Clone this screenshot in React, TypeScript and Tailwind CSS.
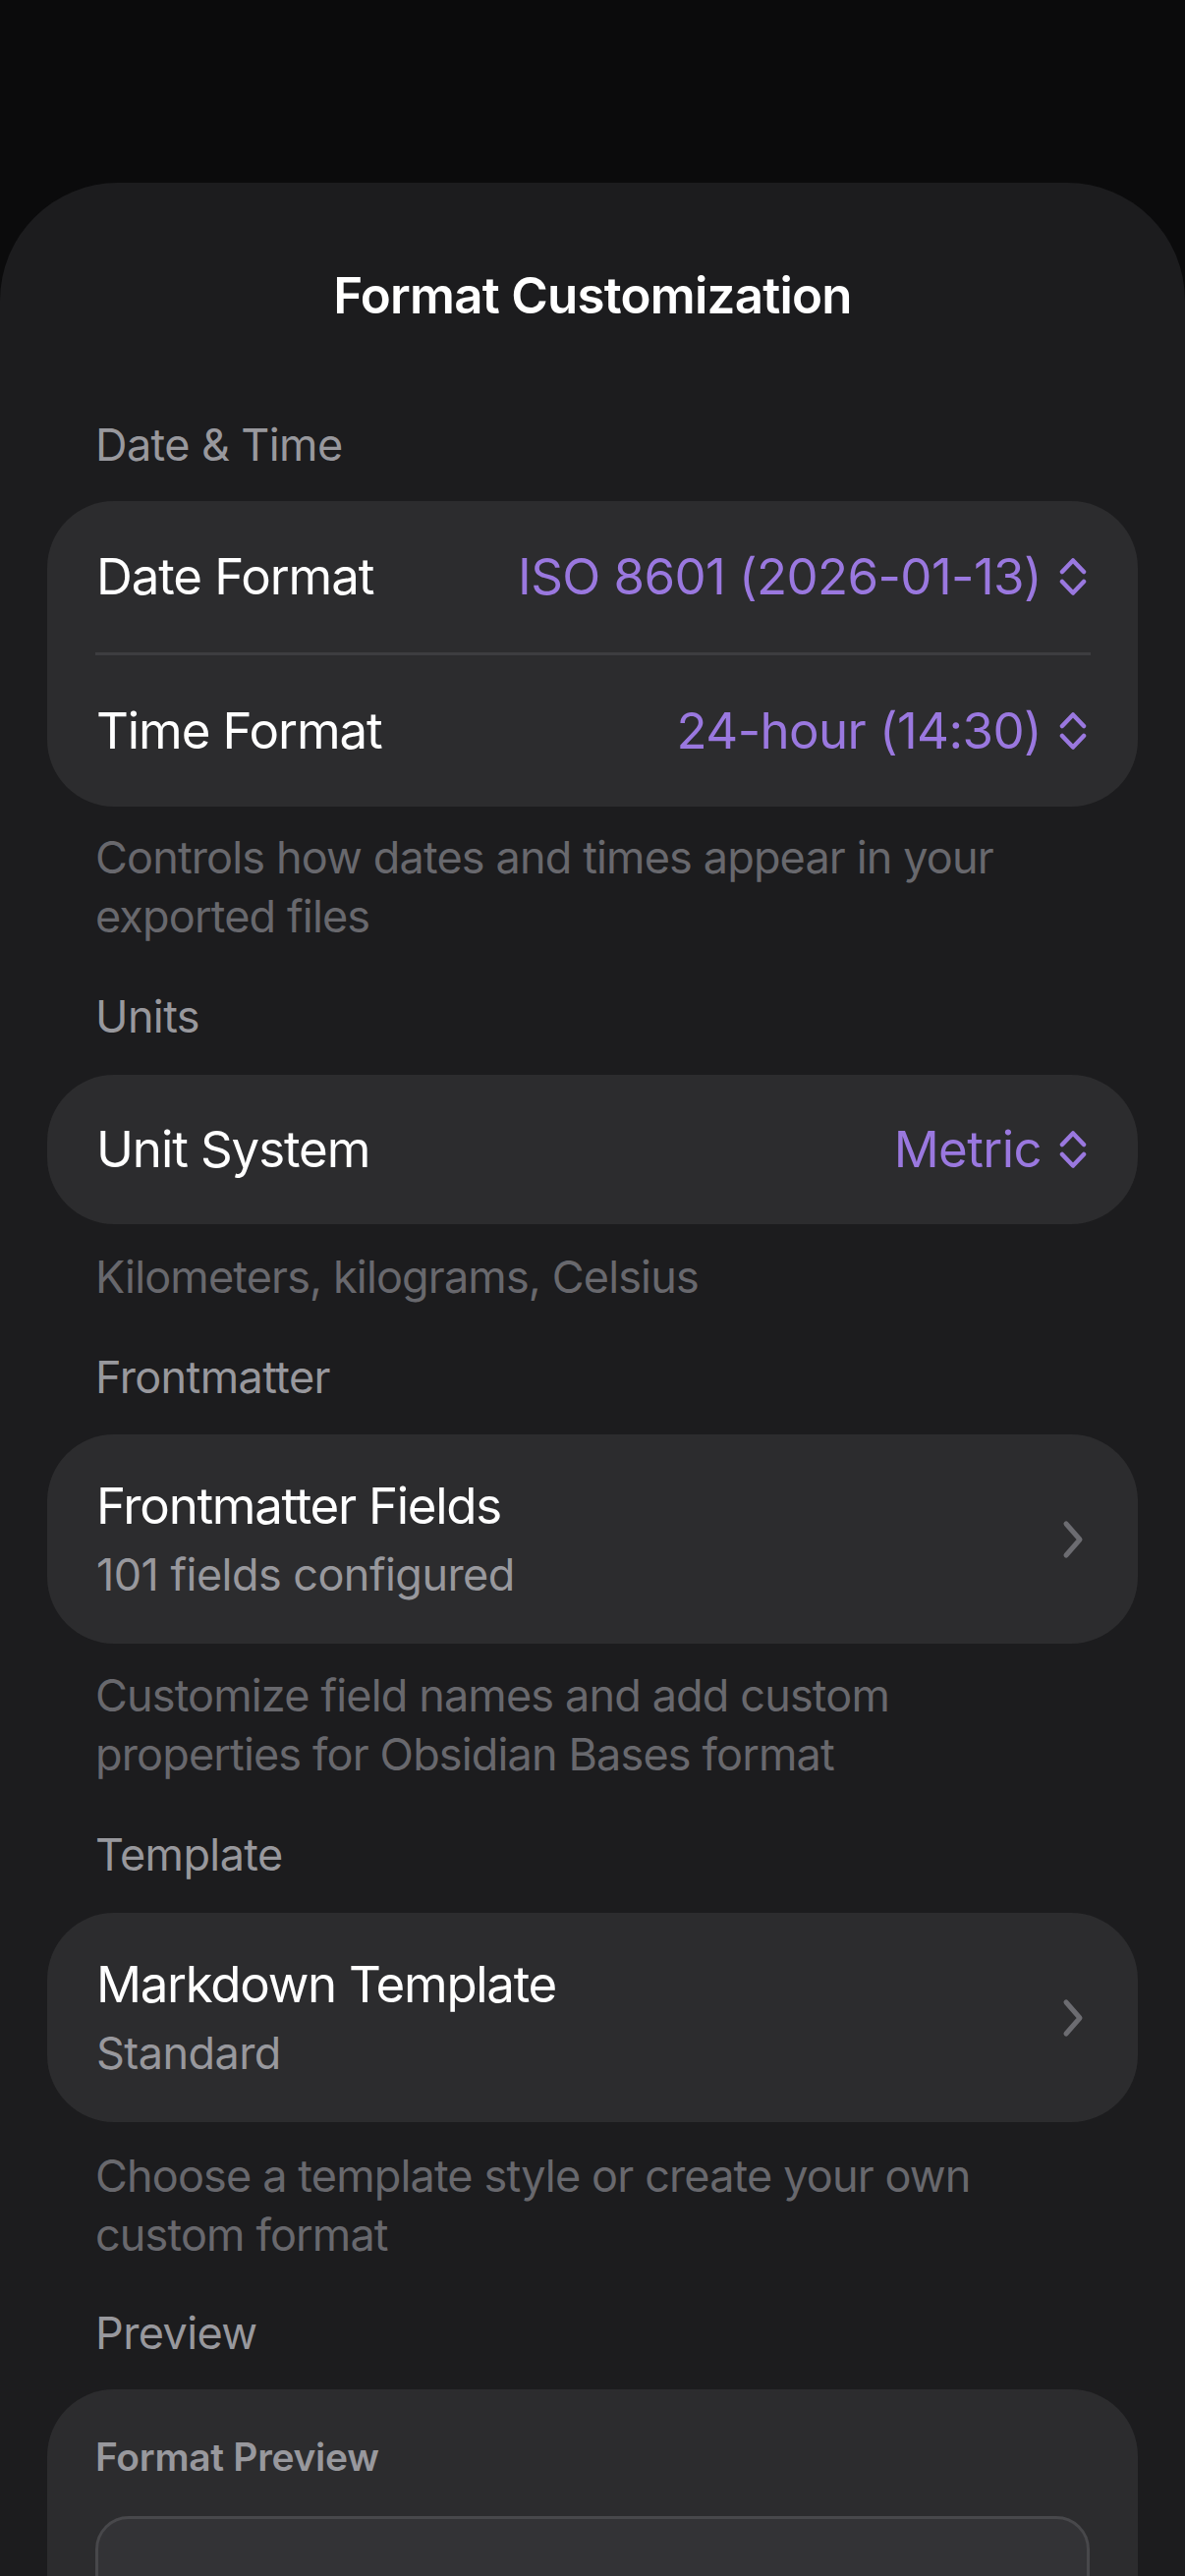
import React from 'react'

const font = { fontFamily: 'Inter, "Noto Sans", sans-serif' }

function UpDown() {
  return (
    <svg width="28" height="40" viewBox="0 0 28 40" fill="none" stroke="#9a78df" strokeWidth="4.5" strokeLinecap="round" strokeLinejoin="round">
      <path d="M3 15 L14 3.5 L25 15" />
      <path d="M3 25 L14 36.5 L25 25" />
    </svg>
  )
}

function ChevronRight() {
  return (
    <svg width="24" height="40" viewBox="0 0 24 40" fill="none" stroke="#6c6c71" strokeWidth="5" strokeLinecap="round" strokeLinejoin="round">
      <path d="M5 4 L19 20 L5 36" />
    </svg>
  )
}

function SectionLabel({ children, className = '' }: { children: React.ReactNode; className?: string }) {
  return <div className={`px-[97px] text-[45px] leading-[54px] tracking-[-0.6px] text-[#98989d] ${className}`}>{children}</div>
}

function Caption({ children, className = '' }: { children: React.ReactNode; className?: string }) {
  return <div className={`px-[97px] pr-[120px] text-[45px] leading-[60px] tracking-[-0.85px] text-[#68686d] ${className}`}>{children}</div>
}

function PickerRow({ label, value }: { label: string; value: string }) {
  return (
    <div className="flex h-[154px] items-center justify-between pl-[50px] pr-[52px]">
      <span className="text-[51px] tracking-[-1.1px] text-white">{label}</span>
      <span className="flex items-center gap-[18px] text-[51px] tracking-[-0.6px] text-[#9a78df]">
        {value}
        <UpDown />
      </span>
    </div>
  )
}

function NavRow({ title, subtitle }: { title: string; subtitle: string }) {
  return (
    <div className="mx-[48px] flex h-[213px] items-center justify-between rounded-[68px] bg-[#2c2c2e] pl-[50px] pr-[54px]">
      <div className="flex flex-col gap-[13px]">
        <span className="text-[51px] leading-[60px] tracking-[-1.3px] text-white">{title}</span>
        <span className="text-[45px] leading-[54px] tracking-[-0.55px] text-[#98989d]">{subtitle}</span>
      </div>
      <ChevronRight />
    </div>
  )
}

export default function App() {
  return (
    <div className="h-[2622px] w-[1206px] overflow-hidden bg-[#0b0b0c] pt-[186px]" style={font}>
      <div className="h-full rounded-t-[120px] bg-[#1c1c1e]">
        <h1 className="pt-[84px] text-center text-[51px] font-semibold leading-[62px] tracking-[-0.75px] text-white">Format Customization</h1>

        <SectionLabel className="mt-[94px]">Date &amp; Time</SectionLabel>
        <div className="mx-[48px] mt-[30px] rounded-[68px] bg-[#2c2c2e]">
          <PickerRow label="Date Format" value="ISO 8601 (2026-01-13)" />
          <div className="ml-[49px] mr-[48px] h-[3px] bg-[#3d3d40]" />
          <PickerRow label="Time Format" value="24-hour (14:30)" />
        </div>
        <Caption className="mt-[22px]">Controls how dates and times appear in your exported files</Caption>

        <SectionLabel className="mt-[45px]">Units</SectionLabel>
        <div className="mx-[48px] mt-[32px] rounded-[68px] bg-[#2c2c2e]">
          <div className="flex h-[152px] items-center justify-between pl-[50px] pr-[52px]">
            <span className="text-[51px] tracking-[-1.1px] text-white">Unit System</span>
            <span className="flex items-center gap-[18px] text-[51px] tracking-[-0.6px] text-[#9a78df]">
              Metric
              <UpDown />
            </span>
          </div>
        </div>
        <Caption className="mt-[24px]">Kilometers, kilograms, Celsius</Caption>

        <SectionLabel className="mt-[45px]">Frontmatter</SectionLabel>
        <div className="mt-[31px]">
          <NavRow title="Frontmatter Fields" subtitle="101 fields configured" />
        </div>
        <Caption className="mt-[23px]">Customize field names and add custom properties for Obsidian Bases format</Caption>

        <SectionLabel className="mt-[45px]">Template</SectionLabel>
        <div className="mt-[32px]">
          <NavRow title="Markdown Template" subtitle="Standard" />
        </div>
        <Caption className="mt-[25px]">Choose a template style or create your own custom format</Caption>

        <SectionLabel className="mt-[43px]">Preview</SectionLabel>
        <div className="mx-[48px] mt-[30px] rounded-t-[68px] bg-[#2c2c2e] px-[49px] pt-[46px] pb-[60px]">
          <div className="text-[39px] font-semibold leading-[46px] tracking-[-0.3px] text-[#98989d]">Format Preview</div>
          <div className="mt-[37px] h-[320px] rounded-[34px] border-[3px] border-[#48484b] bg-[#333336]" />
        </div>
      </div>
    </div>
  )
}
